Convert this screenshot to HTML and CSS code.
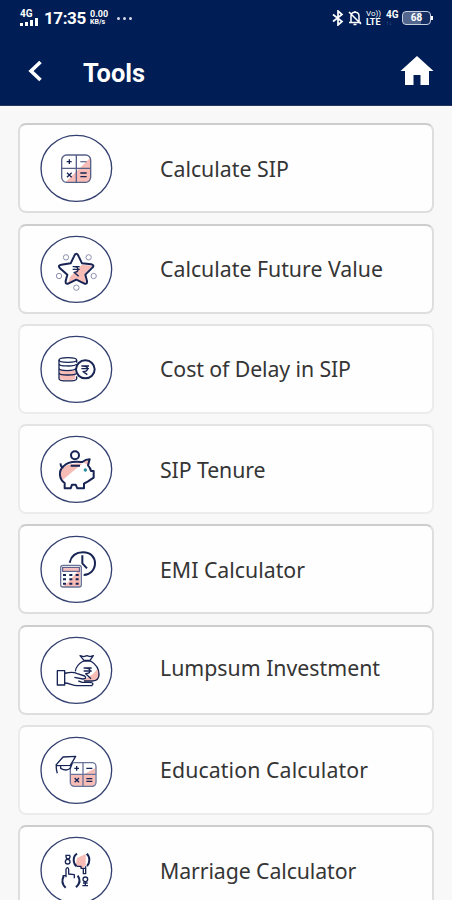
FILE: index.html
```
<!DOCTYPE html>
<html lang="en">
	<head>
		<meta charset="UTF-8" />
		<meta name="viewport" content="width=device-width, initial-scale=1.0" />
		<title>Tools</title>
		<link rel="stylesheet" href="styles.css">
	</head>
	<body>
		<header class="header">
			<div class="status-bar">
				<div class="network">
					<span>4G</span>
					<svg viewBox="0 0 19 8" width="19" height="8"><path d="M0 5h3v3H0zM5 4h3v4H5zM10 2h3v6h-3zM15 0h3v8h-3z" fill="#fff"/></svg>
				</div>
				<span class="clock">17:35</span>
				<div class="speed"><span>0.00</span><span class="unit">KB/s</span></div>
				<span class="dots"><i></i><i></i><i></i></span>
				<div class="status-right">
					<svg class="bluetooth" viewBox="0 0 12 16" width="12" height="16"><path d="M1 4.500l9 7-4 3.500V1l4 3.500-9 7" fill="none" stroke="#fff" stroke-width="1.700"/></svg>
					<svg class="mute" viewBox="0 0 14 16" width="14" height="16"><path d="M3 12V6c0-5 8-5 8 0v6M1 12.500h12M5.500 14.500h3M7 1v2M1 2l12 12" fill="none" stroke="#fff" stroke-width="1.500"/></svg>
					<div class="volte"><span>Vo))</span><b>LTE</b></div>
					<div class="data"><span>4G</span><small>↑↓</small></div>
					<div class="battery"><span>68</span></div>
				</div>
			</div>
			<div class="title-bar">
				<svg class="back" viewBox="0 0 15 22" width="15" height="22"><path d="M12.500 2L3 11l9.500 9" fill="none" stroke="#fff" stroke-width="3.600"/></svg>
				<h1 class="title">Tools</h1>
				<svg class="home" viewBox="0 0 34 30" width="34" height="30"><path d="M17 0l16.500 15H29v14h-8.500V19h-7v10H5V15H.5z" fill="#fff"/></svg>
			</div>
		</header>

		<main class="tools">
			<a class="card">
				<svg class="icon" viewBox="0 3 270 258">
					<ellipse class="ring" cx="139" cy="133" rx="106" ry="99"/>
					<path class="pink" d="M181 101v61q0 12-12 12h-62z"/>
					<g class="line" stroke-width="4"><rect class="soft" x="95" y="93" width="87" height="82" rx="15"/><path class="soft" d="M139 93v82M95 133h87"/></g>
					<path class="line bold" d="M110 113h15M118 106v14M111 146l14 14M125 146l-14 14M151 147h19M151 158h19"/>
					<path class="line soft" d="M151 113h19"/>
				</svg>
				<span class="label sip">Calculate SIP</span>
			</a>
			<a class="card">
				<svg class="icon" viewBox="0 3 270 258">
					<ellipse class="ring" cx="139" cy="133" rx="106" ry="99"/>
					<path class="pink" d="M156 119l32 3-25 26 5 26-29-10-24 9 5-17z"/>
					<path class="line heavy" d="M139 86q4 0 7 8l10 21 27 3q12 3 4 10l-21 21 5 19q1 12-9 7l-23-11-23 11q-10 5-9-7l5-19-22-19q-8-9 4-11l28-4 10-21q3-8 7-8z"/>
					<path class="line bold" d="M128 125h21M128 133h21M132 125c16 0 16 17 0 17l14 12"/>
					<g class="line dots-ring"><circle cx="108" cy="97" r="8"/><circle cx="176" cy="97" r="8"/><circle cx="87" cy="153" r="8"/><circle cx="191" cy="153" r="8"/><circle cx="139" cy="188" r="8"/></g>
				</svg>
				<span class="label future">Calculate Future Value</span>
			</a>
			<a class="card light">
				<svg class="icon" viewBox="0 3 270 258">
					<ellipse class="ring" cx="139" cy="133" rx="106" ry="99"/>
					<path class="pink" d="M90 132q22 8 46 4v26q-22 8-46 0z"/>
					<path class="line bold" d="M87 105v56c0 9 53 9 53 0v-7M140 105v8M87 116c0 9 48 9 53 1M87 130c0 9 48 9 50 0M87 143c0 9 48 9 53 2"/>
					<ellipse class="line bold" cx="113.500" cy="105" rx="26.500" ry="7"/>
					<ellipse class="line heavy" cx="166" cy="133" rx="28" ry="27"/>
					<path class="line bold" d="M154 123h23M154 131h23M159 123c18 0 18 17 0 17l13 9"/>
				</svg>
				<span class="label delay">Cost of Delay in SIP</span>
			</a>
			<a class="card light">
				<svg class="icon" viewBox="0 3 270 258">
					<ellipse class="ring" cx="139" cy="133" rx="106" ry="99"/>
					<path class="pink" d="M93 160c-10-35 23-46 64-44l-20 16-38 32zM160 112l20-9-3 20z"/>
					<circle class="line heavy" cx="135" cy="91" r="12"/>
					<path class="line heavy" d="M92 115q-1 12 9 12M102 123c12-17 40-13 55-12q10-8 22-8l-5 18q7 7 9 17h8v20l-17 11-12 7v14h-20l-5-11h-11l-4 11h-18v-16c-15-9-22-36-2-52M122 122h28"/>
					<circle cx="166" cy="135" r="5" fill="#258b9c"/>
				</svg>
				<span class="label tenure">SIP Tenure</span>
			</a>
			<a class="card">
				<svg class="icon" viewBox="0 3 270 258">
					<ellipse class="ring" cx="139" cy="133" rx="106" ry="99"/>
					<path class="line heavy" d="M119 113c5-22 22-31 40-31 25 0 36 16 36 33 0 20-15 35-34 35M157 91v24l14 15"/>
					<path class="pink" d="M151 132v48q0 5-6 5H97l18-14 26-29z"/>
					<rect class="line soft" x="92" y="121" width="62" height="65" rx="7"/>
					<rect x="98" y="127" width="50" height="12" fill="#f5c0bd" stroke="#424c7d" stroke-width="3"/>
					<path class="line keys" d="M99 150h9M118 150h9M137 150h9M99 163h9M118 163h9M137 163h9M99 176h9M118 176h9M137 176h9"/>
				</svg>
				<span class="label emi">EMI Calculator</span>
			</a>
			<a class="card">
				<svg class="icon" viewBox="0 3 270 258">
					<ellipse class="ring" cx="139" cy="133" rx="106" ry="99"/>
					<path class="pink" d="M204 127q12 34-11 38h-35l32-22z"/>
					<path class="line bold" d="M160 105c-12 7-23 20-24 31M182 105c13 8 25 23 25 40 0 13-8 20-20 20h-25M150 89l12 14h18l10-14-10 3-9-3-10 3zM160 105h22"/>
					<rect class="line bold" x="82" y="134" width="22" height="43"/>
					<path class="line bold" d="M104 142c15-3 23-6 38 1l22 7q8 8-5 9l-26-5M104 171c13 0 23 7 37 8h44q10-9-6-10h-22l-12-4"/>
					<path class="line bold" d="M161 126h24M161 135h24M167 126c17 0 17 17 0 17l16 15"/>
				</svg>
				<span class="label lumpsum">Lumpsum Investment</span>
			</a>
			<a class="card light">
				<svg class="icon" viewBox="0 3 270 258">
					<ellipse class="ring" cx="139" cy="133" rx="106" ry="99"/>
					<path class="pink" d="M122 146h37l37-20v43q0 11-12 11h-48q-14 0-14-12z"/>
					<rect class="line soft" x="121" y="110" width="77" height="71" rx="12"/>
					<path class="line soft" d="M159 110v71M121 145h77"/>
					<path class="line bold" d="M133 127h14M140 120v14M169 127h18M134 156l13 13M147 156l-13 13M169 158h18M169 166h18"/>
					<path class="line bold" d="M77 118l22-25 38-2-16 27-42 1q-1 12 3 23M92 119v8q17 10 29 0l6-16"/>
				</svg>
				<span class="label education">Education Calculator</span>
			</a>
			<a class="card">
				<svg class="icon" viewBox="0 3 270 258">
					<ellipse class="ring" cx="139" cy="133" rx="106" ry="99"/>
					<path class="pink" d="M141 96l26-12v36l-12 7-18-9z"/>
					<path class="line heavy" d="M141 83c-14 9-12 31-1 38M170 83c11 9 10 28 1 37"/>
					<path class="line bold" d="M141 121h12v6h13M160 127v16h7v-22"/>
					<path class="line heavy" d="M101 150c-7 15-4 26 6 35M143 149c9 12 6 25-5 35"/>
					<path class="line bold" d="M108 154v-25q6-9 8 2v13l17 2v11M98 149h10"/>
					<path class="line bold" d="M106 88h15M108 90c0 12 12 12 12 0"/>
					<circle class="line bold" cx="113" cy="107" r="7"/>
					<circle class="line bold" cx="166" cy="160" r="7"/>
					<path class="line bold" d="M166 167v13M157 179h17M159 171h14"/>
				</svg>
				<span class="label marriage">Marriage Calculator</span>
			</a>
		</main>
	</body>
</html>
```
FILE: styles.css
```
* {
	margin: 0;
	padding: 0;
	box-sizing: border-box;
}

body {
	background: #f8f8f8;
	font-family: "Noto Sans", sans-serif;
	height: 900px;
	overflow: hidden;
}

.header {
	height: 105.500px;
	background: #001d55;
	color: #fff;
	font-family: Roboto, sans-serif;
	border-bottom: 1px solid #27365f;
}

.status-bar {
	display: flex;
	align-items: center;
	height: 36px;
	padding: 0 19px 0 20px;
}

.network {
	display: flex;
	flex-direction: column;
	width: 24px;
	font-size: 10px;
	font-weight: 700;
	line-height: 8px;
}

.clock {
	width: 46px;
	font-size: 17px;
	font-weight: 700;
	letter-spacing: -0.4px;
}

.speed {
	display: flex;
	flex-direction: column;
	width: 27px;
	font-size: 9px;
	font-weight: 700;
	line-height: 8px;
}

.speed .unit {
	font-size: 7px;
}

.dots {
	display: flex;
	gap: 3px;
}

.dots i {
	width: 3px;
	height: 3px;
	border-radius: 50%;
	background: #d5dbea;
}

.status-right {
	display: flex;
	align-items: center;
	margin-left: auto;
}

.mute {
	margin: 0 4px 0 4px;
}

.volte {
	display: flex;
	flex-direction: column;
	width: 20px;
	font-size: 8px;
	line-height: 9px;
}

.volte b {
	font-size: 9px;
}

.data {
	width: 16px;
	font-size: 10px;
	font-weight: 700;
	line-height: 9px;
}

.data small {
	display: block;
	font-size: 6px;
	line-height: 7px;
	color: #43629a;
}

.battery {
	position: relative;
	width: 29px;
	height: 14px;
	border: 1px solid #c8cfdf;
	border-radius: 4px;
	background: linear-gradient(90deg, #53668e 68%, #132c61 68%);
	font-size: 10px;
	font-weight: 700;
	line-height: 12px;
	text-align: center;
	margin-right: 2px;
}

.battery:after {
	content: '';
	position: absolute;
	top: 4px;
	right: -3px;
	width: 2px;
	height: 4px;
	background: #fff;
}

.title-bar {
	display: flex;
	align-items: center;
	height: 69px;
	padding: 1px 18px 0 28px;
}

.title {
	margin-left: 40px;
	padding-top: 3px;
	font-size: 25.400px;
	line-height: 30px;
	font-weight: 700;
}

.home {
	margin-left: auto;
}

.tools {
	display: flex;
	flex-direction: column;
	gap: 10.250px;
	padding: 17.900px 18px 0;
}

.card {
	display: flex;
	flex: none;
	align-items: center;
	height: 90px;
	padding-left: 10px;
	background: #fefefe;
	border: 2px solid #dedede;
	border-top-color: #cdcdcd;
	border-radius: 8px;
}

.card.light {
	border-color: #ececec;
	border-top-color: #e3e3e3;
}

.icon {
	width: 90px;
	height: 86px;
	flex: none;
}

.ring {
	fill: #fff;
	stroke: #34406f;
	stroke-width: 4;
}

.pink {
	fill: #f6bcb5;
}

.line {
	fill: none;
	stroke: #172454;
	stroke-width: 4;
	stroke-linejoin: round;
}

.line.heavy {
	stroke-width: 6;
}

.soft {
	stroke: #566088;
}

.line.soft {
	stroke: #6a7398;
}

.line.dots-ring {
	stroke: #8b91ae;
	stroke-width: 3;
}

.line.keys {
	stroke-width: 6;
}

.label {
	margin-left: 40px;
	padding-top: 1px;
	font-size: 21.300px;
	line-height: 30px;
	color: #353535;
	white-space: nowrap;
}

.delay,
.tenure,
.marriage {
	letter-spacing: -0.1px;
}

.education {
	letter-spacing: 0.1px;
}

.lumpsum {
	padding: 0 0 4px;
}
```
